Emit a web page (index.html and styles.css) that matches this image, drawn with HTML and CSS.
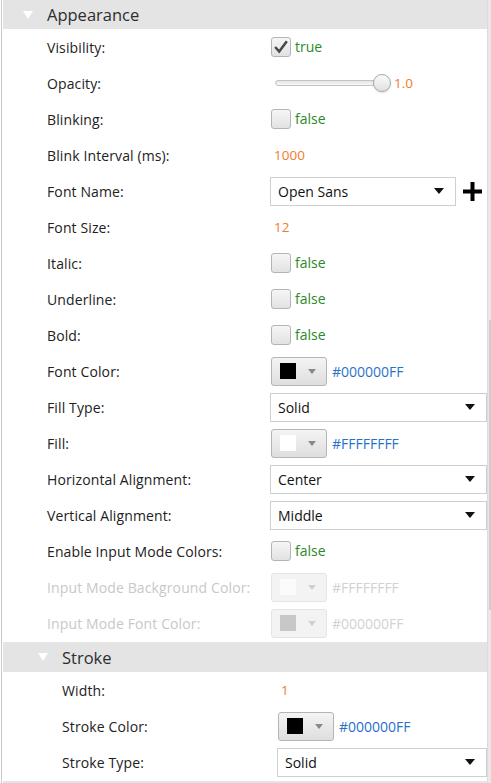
FILE: index.html
```html
<!DOCTYPE html>
<html>
<head>
<meta charset="utf-8">
<link rel="stylesheet" href="styles.css">
</head>
<body>
<div class="frame">
  <div class="panel">
    <div class="header"><span class="tri"></span><span class="htitle">Appearance</span></div>
    <div class="section">
      <div class="row"><span class="lbl">Visibility:</span><div class="val"><span class="cb"><svg viewBox="0 0 20 20" width="18" height="18"><polyline points="3.5,10 8,15 16.5,3.5" fill="none" stroke="#484848" stroke-width="2.8"/></svg></span><span class="bool">true</span></div></div>
      <div class="row"><span class="lbl">Opacity:</span><div class="val"><div class="slider"><div class="track"></div><div class="thumb"></div></div><span class="num">1.0</span></div></div>
      <div class="row"><span class="lbl">Blinking:</span><div class="val"><span class="cb"></span><span class="bool">false</span></div></div>
      <div class="row"><span class="lbl">Blink Interval (ms):</span><div class="val"><span class="num pad">1000</span></div></div>
      <div class="row"><span class="lbl">Font Name:</span><div class="val"><div class="combo short"><span>Open Sans</span><span class="arrow"></span></div><svg class="plus" viewBox="0 0 21 21" width="21" height="21"><path d="M10.5 1v19M1 10.5h19" stroke="#000" stroke-width="4"/></svg></div></div>
      <div class="row"><span class="lbl">Font Size:</span><div class="val"><span class="num pad">12</span></div></div>
      <div class="row"><span class="lbl">Italic:</span><div class="val"><span class="cb"></span><span class="bool">false</span></div></div>
      <div class="row"><span class="lbl">Underline:</span><div class="val"><span class="cb"></span><span class="bool">false</span></div></div>
      <div class="row"><span class="lbl">Bold:</span><div class="val"><span class="cb"></span><span class="bool">false</span></div></div>
      <div class="row"><span class="lbl">Font Color:</span><div class="val"><span class="cbtn"><span class="sw black"></span><span class="sarrow"></span></span><span class="hex">#000000FF</span></div></div>
      <div class="row"><span class="lbl">Fill Type:</span><div class="val"><div class="combo full"><span>Solid</span><span class="arrow"></span></div></div></div>
      <div class="row"><span class="lbl">Fill:</span><div class="val"><span class="cbtn"><span class="sw white"></span><span class="sarrow"></span></span><span class="hex">#FFFFFFFF</span></div></div>
      <div class="row"><span class="lbl">Horizontal Alignment:</span><div class="val"><div class="combo full"><span>Center</span><span class="arrow"></span></div></div></div>
      <div class="row"><span class="lbl">Vertical Alignment:</span><div class="val"><div class="combo full"><span>Middle</span><span class="arrow"></span></div></div></div>
      <div class="row"><span class="lbl">Enable Input Mode Colors:</span><div class="val"><span class="cb"></span><span class="bool">false</span></div></div>
      <div class="row disabled"><span class="lbl">Input Mode Background Color:</span><div class="val"><span class="cbtn"><span class="sw white"></span><span class="sarrow"></span></span><span class="hex">#FFFFFFFF</span></div></div>
      <div class="row disabled"><span class="lbl">Input Mode Font Color:</span><div class="val"><span class="cbtn"><span class="sw grey"></span><span class="sarrow"></span></span><span class="hex">#000000FF</span></div></div>
    </div>
    <div class="header sub"><span class="tri"></span><span class="htitle">Stroke</span></div>
    <div class="section sub">
      <div class="row"><span class="lbl">Width:</span><div class="val"><span class="num pad">1</span></div></div>
      <div class="row"><span class="lbl">Stroke Color:</span><div class="val"><span class="cbtn"><span class="sw black"></span><span class="sarrow"></span></span><span class="hex">#000000FF</span></div></div>
      <div class="row"><span class="lbl">Stroke Type:</span><div class="val"><div class="combo full"><span>Solid</span><span class="arrow"></span></div></div></div>
    </div>
    <div class="header stub"></div>
  </div>
  <div class="scroll"><div class="sthumb"></div></div>
</div>
</body>
</html>
```

FILE: styles.css
```css
* { box-sizing: border-box; }
html, body { margin: 0; padding: 0; background: #fff; }
body {
  font-family: "Open Sans", "Noto Sans", sans-serif;
  font-size: 14px;
  color: #222;
  overflow: hidden;
  height: 783px;
}
.frame {
  display: flex;
  width: 491px;
  height: 783px;
  padding-left: 1px;
}
.panel {
  width: 486px;
  border-left: 1px solid #c9c9c9;
  padding-left: 1px;
  display: flex;
  flex-direction: column;
}
.scroll {
  width: 4px;
  background: #e8e8e8;
  border-left: 1px solid #dcdcdc;
}
.sthumb {
  margin-top: 320px;
  height: 290px;
  background: #cfcfcf;
  margin-left: 1px;
}
.header {
  height: 29px;
  background: #e4e4e4;
  display: flex;
  align-items: center;
  flex-shrink: 0;
}
.header.sub { height: 30px; margin-top: 1px; }
.header.stub { height: 10px; margin-top: 1px; }
.tri {
  width: 0; height: 0;
  border-left: 5px solid transparent;
  border-right: 5px solid transparent;
  border-top: 8px solid #fff;
  margin-left: 20px;
  margin-right: 14px;
}
.header.sub .tri { margin-left: 35px; }
.htitle {
  font-size: 16.5px;
  color: #2e2e2e;
}
.section { display: flex; flex-direction: column; }
.row {
  height: 36px;
  display: grid;
  grid-template-columns: 223px 1fr;
  align-items: center;
  padding-left: 44px;
}
.section.sub .row {
  padding-left: 59px;
  grid-template-columns: 215px 1fr;
}
.lbl { white-space: nowrap; letter-spacing: 0.12px; }
.val { display: flex; align-items: center; height: 100%; }
.cb {
  width: 20px; height: 20px;
  margin-left: 1px;
  border: 1px solid #b4b4b4;
  border-radius: 3px;
  background: linear-gradient(#f6f6f6, #e2e2e2);
  display: flex;
  align-items: center;
  justify-content: center;
}
.bool { color: #2b8a2b; margin-left: 4px; font-size: 14px; margin-top: -1px; }
.num { color: #f27a2c; font-size: 13.5px; }
.num.pad { padding-left: 4px; }
.slider {
  position: relative;
  width: 117px;
  height: 20px;
  margin-left: 5px;
  display: flex;
  align-items: center;
}
.track {
  width: 108px;
  height: 6px;
  border: 1px solid #c4c4c4;
  border-radius: 3px;
  background: linear-gradient(#e4e4e4, #f7f7f7);
}
.thumb {
  position: absolute;
  left: 98px;
  top: 1px;
  width: 18px; height: 18px;
  border-radius: 50%;
  border: 1px solid #a8a8a8;
  background: linear-gradient(#fbfbfb, #e0e0e0);
  box-shadow: 0 1px 2px rgba(0,0,0,0.15);
}
.slider + .num { margin-left: 2px; }
.combo {
  height: 29px;
  border: 1px solid #cfcfcf;
  background: #fff;
  display: flex;
  align-items: center;
  justify-content: space-between;
  padding: 0 11px 0 7px;
  font-size: 14px;
  color: #111;
}
.combo.short { width: 186px; }
.combo.full { width: 217px; }
.section.sub .combo.full { width: 210px; }
.arrow {
  width: 0; height: 0;
  border-left: 5px solid transparent;
  border-right: 5px solid transparent;
  border-top: 6px solid #111;
}
.plus { margin-left: 6px; }
.cbtn {
  width: 56px; height: 29px;
  margin-left: 1px;
  border: 1px solid #b4b4b4;
  border-radius: 3px;
  background: linear-gradient(#f4f4f4, #dedede);
  display: flex;
  align-items: center;
  padding-left: 8px;
}
.sw { width: 16px; height: 16px; }
.sw.black { background: #000; }
.sw.white { background: #fff; }
.sw.grey { background: #c8c8c8; }
.sarrow {
  width: 0; height: 0;
  border-left: 4.5px solid transparent;
  border-right: 4.5px solid transparent;
  border-top: 5px solid #888;
  margin-left: 12px;
}
.hex { color: #2a72c8; margin-left: 5px; font-size: 14px; }
.row.disabled .lbl { color: #c8c8c8; }
.row.disabled .cbtn { border-color: #e4e4e4; background: #f3f3f3; }
.row.disabled .sarrow { border-top-color: #d0d0d0; }
.row.disabled .sw.white { background: #fbfbfb; }
.row.disabled .hex { color: #d2d2d2; }
```
